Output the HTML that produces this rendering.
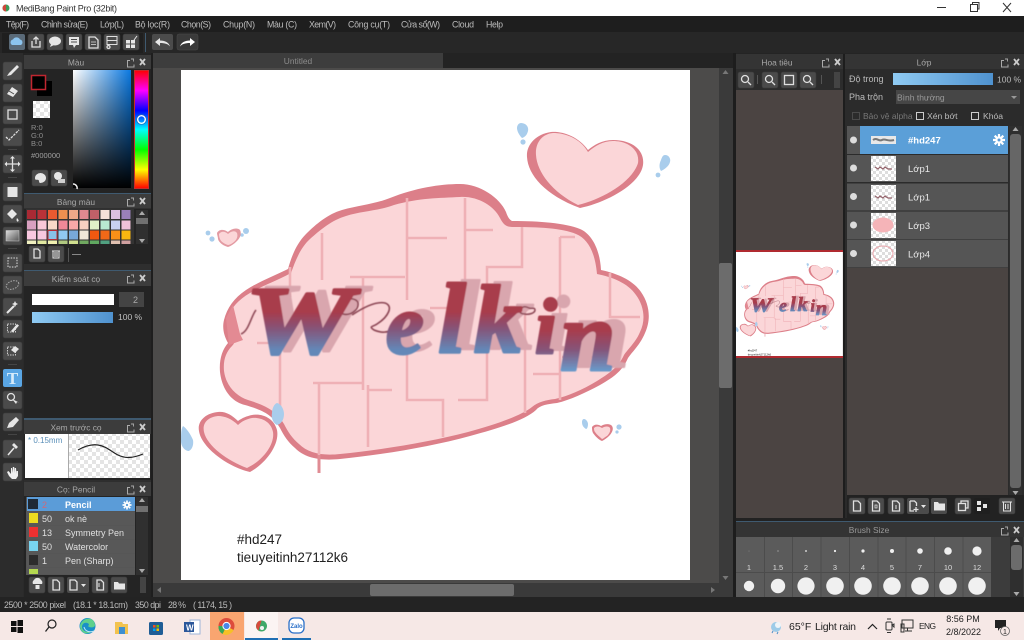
<!DOCTYPE html>
<html><head><meta charset="utf-8"><title>MediBang Paint Pro</title>
<style>
html,body{margin:0;padding:0;background:#2a2a2a;width:1024px;height:640px;overflow:hidden}
svg{display:block}
text{font-family:"Liberation Sans",sans-serif;font-size:8.6px;fill:#c4c4c4}
.h{fill:#a8a8a8;text-anchor:middle;font-size:8.4px}
.m{fill:#bdbdbd;font-size:8.8px}
.l{fill:#e0e0e0;font-size:9px}
.ic{fill:none;stroke:#e0e0e0;stroke-width:1.3}
.if{fill:#e6e6e6}
.mz{fill:none;stroke:#efb1b6;stroke-width:2.6}
.s{fill:#bcbcbc;font-size:8.8px}
.n{font-size:7.5px;fill:#ddd;text-anchor:middle}
.lt{font-family:"Liberation Serif",serif;font-style:italic;font-weight:700;stroke-linejoin:round}
.g{fill:#d9a6ae;stroke:#d9a6ae;stroke-width:2}
.k{fill:url(#ink);stroke:url(#ink);stroke-width:3}
.k2{fill:url(#ink2);stroke:url(#ink2);stroke-width:3}
</style></head><body>
<svg xmlns="http://www.w3.org/2000/svg" width="1024" height="640" viewBox="0 0 1024 640">
<defs>
<filter id="soft" x="-5%" y="-5%" width="110%" height="110%"><feGaussianBlur stdDeviation=".6"/></filter>
<pattern id="chk" width="8" height="8" patternUnits="userSpaceOnUse"><rect width="8" height="8" fill="#fff"/><rect width="4" height="4" fill="#e4e4e4"/><rect x="4" y="4" width="4" height="4" fill="#e4e4e4"/></pattern>
<pattern id="chk2" width="6" height="6" patternUnits="userSpaceOnUse"><rect width="6" height="6" fill="#fff"/><rect width="3" height="3" fill="#ddd"/><rect x="3" y="3" width="3" height="3" fill="#ddd"/></pattern>
<linearGradient id="sv1" x1="0" y1="0" x2="1" y2="0"><stop offset="0" stop-color="#fff"/><stop offset="1" stop-color="#0a78e0"/></linearGradient>
<linearGradient id="sv2" x1="0" y1="0" x2="0" y2="1"><stop offset="0" stop-color="#000" stop-opacity="0"/><stop offset="1" stop-color="#000"/></linearGradient>
<linearGradient id="hue" x1="0" y1="0" x2="0" y2="1"><stop offset="0" stop-color="#f00"/><stop offset=".17" stop-color="#f0f"/><stop offset=".34" stop-color="#00f"/><stop offset=".5" stop-color="#0ff"/><stop offset=".67" stop-color="#0f0"/><stop offset=".84" stop-color="#ff0"/><stop offset="1" stop-color="#f00"/></linearGradient>
<linearGradient id="bar" x1="0" y1="0" x2="1" y2="0"><stop offset="0" stop-color="#8fcaf2"/><stop offset="1" stop-color="#4f92cf"/></linearGradient>
<linearGradient id="grad" x1="0" y1="0" x2="1" y2="1"><stop offset="0" stop-color="#ddd"/><stop offset="1" stop-color="#555"/></linearGradient>
<linearGradient id="ink" gradientUnits="userSpaceOnUse" x1="0" y1="312" x2="0" y2="350"><stop offset="0" stop-color="#a83c4c"/><stop offset=".45" stop-color="#85557a"/><stop offset="1" stop-color="#6388b8"/></linearGradient>
<linearGradient id="ink2" gradientUnits="userSpaceOnUse" x1="0" y1="330" x2="0" y2="370"><stop offset="0" stop-color="#a83c4c"/><stop offset=".5" stop-color="#85557a"/><stop offset="1" stop-color="#6a98c8"/></linearGradient>
<g id="btn"><rect width="16" height="16" rx="2" fill="#4b4b4b" stroke="#3a3a3a" stroke-width=".6"/></g>
<g id="bt2"><rect width="19" height="18" rx="2" fill="#4b4b4b" stroke="#3a3a3a" stroke-width=".6"/></g>
<g id="dock"><path d="M-9 -1.5h-2.500v6.500h6.500v-2.500" fill="none" stroke="#aaa"/><path d="M-8 -3l2.500 0v2.500" fill="none" stroke="#aaa" stroke-width=".9"/><path d="M1 -3l5 6M6 -3l-5 6" stroke="#ccc" stroke-width="1.800"/></g>
<g id="gear"><circle r="3.600" fill="#fff"/><g stroke="#fff" stroke-width="2.200"><path d="M0-6V6M-6 0H6M-4.300-4.300L4.300 4.300M-4.300 4.300L4.300-4.300"/></g><circle r="1.500" fill="#5a9cd8"/></g>
<g id="art">
 <rect x="181" y="70" width="509" height="510" fill="#fff"/>
 <g fill="#a9cdec"><path d="M521 123c4 0 8 3 7 8-1 4-3 6-6 7-3-3-5-7-5-10 0-3 2-5 4-5z"/><circle cx="523" cy="142" r="2.600"/><path d="M665 155c4 0 6 4 5 7-1 4-5 7-9 9-2-3-2-7 0-11 1-3 2-5 4-5z"/><circle cx="658" cy="175" r="2.400"/>
 <path d="M183 426c3 2 7 7 10 14 1 6-2 11-5 11-4-1-7-5-7-10 0-6 0-12 2-15z"/><circle cx="208" cy="233" r="2.400"/><circle cx="212" cy="239" r="2.600"/><circle cx="246" cy="231" r="3"/><circle cx="242" cy="235" r="1.800"/><path d="M584 419c2 0 4 3 4 5 0 3-1 5-2 5-3-2-4-4-4-7 0-2 1-3 2-3z"/><circle cx="619" cy="427" r="2.600"/><circle cx="617" cy="432" r="1.600"/></g>
 <path d="M588 150C578 136 562 131 551 132 536 134 526 145 527 157 528 175 545 195 580 208 605 203 640 185 643 165 645 150 632 140 613 140 602 140 594 145 588 150Z" fill="#dc7f89"/>
 <path d="M588 152C580 138 565 133 553 133 542 134 535 143 536 155 537 172 552 192 578 205 600 200 632 183 638 163 640 150 628 141 613 141 603 141 595 146 588 152Z" fill="#fbd6d8"/>
 <path d="M460 184C480 184 500 198 506 212 508 218 510 220 512 221 540 221 565 223 580 229 592 234 600 250 601 270 615 273 632 279 641 292 650 305 651 320 645 333 640 345 632 352 628 358 622 372 612 378 600 385 585 393 570 400 557 403 548 404 540 405 536 410 525 420 500 428 470 436 430 447 380 455 340 459 320 461 305 458 295 448 288 442 284 436 280 428 272 414 262 410 245 405 232 402 222 390 220 372 219 360 222 350 228 343 224 336 222 328 224 320 227 308 234 298 246 290 258 282 274 276 288 269 291 258 296 244 306 234 316 224 328 214 342 210 360 205 375 204 390 198 415 188 440 184 460 184Z" fill="#dc7f89"/>
 <path d="M460 197C478 196 494 206 500 218 503 224 506 227 512 227 538 227 562 228 576 234 588 239 595 252 597 274 612 277 628 283 636 295 644 306 646 320 640 332 636 342 628 349 624 355 618 368 608 374 597 381 582 390 568 396 555 399 546 400 538 402 532 407 522 415 498 424 468 432 430 442 380 450 340 454 322 456 308 453 299 444 292 438 288 432 284 424 276 410 264 405 248 400 236 396 226 386 224 371 223 360 226 352 232 346 236 342 235 338 232 335 228 330 226 324 228 318 231 308 238 300 250 293 262 286 276 281 291 273 295 262 300 248 310 239 320 230 332 220 346 216 362 211 378 211 394 205 418 198 440 198 460 197Z" fill="#fbd6d8"/>
 <path d="M226 318L233 305 240 334 243 340 229 345Z" fill="#e38a93"/>
 <path class="mz" d="M322 233V280M290 267V297M280 350V407M350 277H405M407 198V300M407 238H447M465 198V283M465 230H493M522 227V267H487V400H458M560 237V400M560 237H575M610 273V317H640M363 277V390M313 383H363M319 383V455M368 385V447M368 390H392M407 353V400H443V437M525 310V413M533 374H560M562 357H597M430 308H463M257 343H280"/>
 <path d="M319 455V473" stroke="#e08c94" stroke-width="3"/>
 <path d="M238 421C232 415 225 411 218 412 206 413 197 421 199 431 201 446 225 466 250 472 265 464 280 445 277 430 274 418 262 413 252 415 247 416 242 418 238 421Z" fill="#dc7f89"/>
 <path d="M238 425C232 419 225 416 218 416 208 417 202 423 204 432 207 446 228 461 247 468 262 461 275 445 273 432 271 421 260 417 252 418 247 419 242 421 238 425Z" fill="#fbd6d8"/>
 <g fill="#a9cdec"><path d="M277 403c4 1 7 6 7 11 0 6-3 10-7 11-4-2-6-7-5-12 0-4 2-9 5-10z"/></g>
 <path d="M217 233c2-4 7-4 11-1 3-3 9-5 12-2 2 4 0 8-3 11-3 3-6 5-9 6-4-1-9-4-10-8 0-2-1-4-1-6z" fill="#e39aa2"/><path d="M219 234c2-3 6-3 9 0 3-3 7-4 9-1 1 3 0 6-2 8-2 2-5 4-7 4-3-1-7-3-8-6-1-2-1-4-1-5z" fill="#fbd6d8"/>
 <path d="M592 427c2-3 6-3 9-1 3-2 9-3 11 0 2 3 0 7-3 10-2 2-5 4-7 5-3-1-7-5-9-8-1-2-1-4-1-6z" fill="#dd7f89"/><path d="M594 428c2-2 5-2 8 0 3-2 7-2 8 0 1 3-1 6-3 8-2 1-4 3-5 3-2-2-5-4-7-7-1-1-1-3-1-4z" fill="#fbd6d8"/>
 <g filter="url(#soft)">
 <text class="lt g" x="257" y="350" textLength="108" lengthAdjust="spacingAndGlyphs" style="font-size:96px">W</text>
 <text class="lt g" x="398" y="350" style="font-size:85px">e</text>
 <text class="lt g" x="452" y="349" style="font-size:100px">l</text>
 <text class="lt g" x="486" y="349" style="font-size:96px">k</text>
 <text class="lt g" x="548" y="350" style="font-size:78px">i</text>
 <text class="lt g" x="574" y="367" style="font-size:100px">n</text>
 <path d="M340 305c6-9 17-7 18-2 1 7-8 13-15 11-5-2-5-6-3-9zM352 315c12-8 24-14 33-12 9 3 3 14-8 21-4 3-9 2-3 6 7 3 14 3 18-1" fill="none" stroke="#8a4452" stroke-width="1.600"/>
 <path d="M241 334c8-3 10-18 15-24M520 310c3-5 7-3 9-2 3 1 6-1 6 2s-6 5-10 4c-3 0-6-1-5-4z" fill="none" stroke="#8a4452" stroke-width="1.500"/>
 <text class="lt k" x="245" y="353" textLength="108" lengthAdjust="spacingAndGlyphs" style="font-size:96px">W</text>
 <text class="lt k" x="386" y="353" style="font-size:85px">e</text>
 <text class="lt k" x="438" y="352" style="font-size:100px">l</text>
 <text class="lt k" x="474" y="352" style="font-size:96px">k</text>
 <text class="lt k2" x="535" y="353" style="font-size:78px">i</text>
 <text class="lt k2" x="560" y="370" style="font-size:100px">n</text>
 </g>
 <text x="237" y="544" style="font-size:13.500px;fill:#222">#hd247</text>
 <text x="237" y="562" style="font-size:13.500px;fill:#222" textLength="111">tieuyeitinh27112k6</text>
</g>
<clipPath id="thumb"><rect x="736" y="252" width="107" height="105"/></clipPath>
<clipPath id="artc"><rect x="181" y="70" width="509" height="510"/></clipPath>
</defs>

<rect width="1024" height="640" fill="#2a2a2a"/>
<rect width="1024" height="16" fill="#fff"/>
<circle cx="6" cy="8" r="3.500" fill="#3d9a5a"/><path d="M6 4.500a3.500 3.500 0 0 0 0 7z" fill="#d0483c"/>
<text x="16" y="11.500" textLength="101" style="fill:#333;font-size:9px">MediBang Paint Pro (32bit)</text>
<path d="M937 7.500h9" stroke="#333"/><path d="M970.500 4.500h7v7h-7zM972.500 4.500v-2h6.500v6.500h-1.500" fill="none" stroke="#333"/><path d="M1003 3l8 9M1011 3l-8 9" stroke="#333"/>
<rect y="16" width="1024" height="16" fill="#1e1e1e"/>
<text class="m" x="6" y="27.500" textLength="23">Tệp(F)</text><text class="m" x="41" y="27.500" textLength="47">Chỉnh sửa(E)</text><text class="m" x="100" y="27.500" textLength="24">Lớp(L)</text><text class="m" x="135" y="27.500" textLength="35">Bộ lọc(R)</text><text class="m" x="181" y="27.500" textLength="30">Chọn(S)</text><text class="m" x="223" y="27.500" textLength="32">Chụp(N)</text><text class="m" x="267" y="27.500" textLength="30">Màu (C)</text><text class="m" x="309" y="27.500" textLength="27">Xem(V)</text><text class="m" x="348" y="27.500" textLength="42">Công cụ(T)</text><text class="m" x="401" y="27.500" textLength="39">Cửa sổ(W)</text><text class="m" x="452" y="27.500" textLength="22">Cloud</text><text class="m" x="486" y="27.500" textLength="17">Help</text>
<rect y="32" width="1024" height="21" fill="#272727"/>
<rect x="2" y="33" width="141" height="20" fill="#1f1f1f"/>
<path d="M145.500 33v19" stroke="#3f5a70"/>
<rect x="9" y="34" width="16" height="16" rx="2" fill="#5a6a78"/><path d="M12 45a3 3 0 0 1 1-5.500 4 4 0 0 1 7 0 3 3 0 0 1 1 5.500z" fill="#8cc4ee"/>
<use href="#btn" x="28" y="34"/><path d="M32 41v6h8v-6M36 44v-7M33.500 39.500l2.500-2.500 2.500 2.500" class="ic"/>
<use href="#btn" x="47" y="34"/><ellipse cx="55" cy="41" rx="6" ry="4.500" class="if"/><path d="M51 44l-1 3 4-2z" class="if"/>
<use href="#btn" x="66" y="34"/><rect x="69" y="37" width="10" height="8" class="if"/><path d="M73 45l1 3 2-3z" class="if"/><path d="M71 39.500h6M71 42h6" stroke="#4b4b4b"/>
<use href="#btn" x="85" y="34"/><path d="M89 37h6l3 3v8h-9z" class="ic"/><path d="M91 42h5M91 44.500h5" stroke="#e0e0e0" stroke-width=".8"/>
<use href="#btn" x="104" y="34"/><path d="M107 36.500h10v4h-10zM107 40.500h10v4h-10zM107 44.500h10" class="ic" style="stroke-width:1"/><circle cx="108.500" cy="47" r="1.500" class="ic"/>
<use href="#btn" x="123" y="34"/><rect x="126" y="40" width="4" height="3.500" class="if"/><rect x="131" y="40" width="4" height="3.500" class="if"/><rect x="126" y="44.500" width="4" height="3.500" class="if"/><rect x="131" y="44.500" width="4" height="3.500" class="if"/><path d="M134 40l3-4" stroke="#e6e6e6"/>
<rect x="152" y="34" width="21" height="16" rx="2" fill="#4b4b4b"/><path d="M155 42l5-4v2.500c5 0 9 2 10 6-2-2.500-5-3.500-10-3.500v3z" class="if"/>
<rect x="177" y="34" width="21" height="16" rx="2" fill="#3a3a3a" stroke="#4a4a4a" stroke-width=".5"/><path d="M195 42l-5-4v2.500c-5 0-9 2-10 6 2-2.500 5-3.500 10-3.500v3z" fill="#fff"/>
<rect y="53" width="1024" height="2" fill="#242424"/>

<rect x="0" y="53" width="23" height="544" fill="#2c2c2c"/>
<use href="#bt2" x="3" y="62"/><path d="M7 76l2-3 8-8 2 2-8 8z" class="if"/>
<use href="#bt2" x="3" y="84"/><path d="M7 94l5-7 6 4-5 6z" class="if"/><path d="M9 91l5 3" stroke="#4b4b4b"/>
<use href="#bt2" x="3" y="106"/><rect x="8" y="110" width="9" height="9" class="ic"/>
<use href="#bt2" x="3" y="128"/><path d="M6 137l3 3 3-3 7-7" class="ic" stroke-dasharray="2.500 1"/>
<use href="#bt2" x="3" y="155"/><path d="M12.500 157v14M5.500 164h14" class="ic"/><path d="M12.500 156l-2.500 2.500h5zM12.500 172l-2.500-2.500h5zM4.500 164l2.500-2.500v5zM20.500 164l-2.500-2.500v5z" class="if"/>
<use href="#bt2" x="3" y="183"/><rect x="7.500" y="187" width="10" height="10" class="if"/>
<use href="#bt2" x="3" y="205"/><path d="M7 214l5-5 5 5-5 5zM17 218c2 2 2 3 1 3.500s-2-1-1-3.500z" class="if"/>
<use href="#bt2" x="3" y="227"/><rect x="6" y="230.500" width="13" height="10.500" fill="url(#grad)" stroke="#ccc" stroke-width=".5"/>
<use href="#bt2" x="3" y="254"/><rect x="8" y="258" width="9" height="9" fill="none" stroke="#ddd" stroke-dasharray="1.500 1.200"/>
<use href="#bt2" x="3" y="276"/><ellipse cx="12.500" cy="285" rx="6.500" ry="4" fill="none" stroke="#aaa" stroke-dasharray="1.500 1.200" transform="rotate(-20 12.500 285)"/>
<use href="#bt2" x="3" y="298"/><path d="M7 313l7-7" stroke="#e6e6e6" stroke-width="2"/><path d="M15 301l1 2 2 1-2 1-1 2-1-2-2-1 2-1z" class="if"/>
<use href="#bt2" x="3" y="320"/><rect x="7.500" y="324" width="8" height="8" fill="none" stroke="#ccc" stroke-dasharray="1.500 1"/><path d="M11 331l6-7 2 1.500-6 7z" class="if"/>
<use href="#bt2" x="3" y="342"/><rect x="7.500" y="347" width="8" height="8" fill="none" stroke="#ccc" stroke-dasharray="1.500 1"/><path d="M11 350l4-4 4 3-4 4z" class="if"/>
<rect x="3" y="369" width="19" height="18" rx="2" fill="#5aa6e4"/><text x="12.500" y="384" style="font-family:'Liberation Serif',serif;font-size:17px;font-weight:700;fill:#d8ecfa;text-anchor:middle">T</text>
<use href="#bt2" x="3" y="391"/><circle cx="11" cy="397" r="3.500" class="ic"/><path d="M12 399l4 5 1-2 2 .5z" class="if"/>
<use href="#bt2" x="3" y="413"/><path d="M7 428l2-5 7-6 3 3-6 7z" class="if"/>
<use href="#bt2" x="3" y="440"/><path d="M8 455l6-7" stroke="#e6e6e6" stroke-width="1.500"/><path d="M12 445l2-2 4 4-2 2z" class="if"/>
<use href="#bt2" x="3" y="463"/><path d="M7 472l2 4 3 3h4l2-3v-5h-1.500v3l-.5-6h-1.300v5l-.5-6h-1.400v6l-.8-5H11v6l-2.500-3z" fill="#f0f0f0"/>
<g fill="#454545"><rect x="8" y="149" width="9" height="1"/><rect x="8" y="177" width="9" height="1"/><rect x="8" y="248" width="9" height="1"/><rect x="8" y="364" width="9" height="1"/><rect x="8" y="434" width="9" height="1"/></g>

<rect x="24" y="55" width="127" height="542" fill="#242424"/>
<rect x="24" y="55" width="127" height="14" fill="#3c3c3c"/><text class="h" x="76" y="65.500">Màu</text><use href="#dock" x="139" y="62"/>
<rect x="37" y="81" width="15" height="15" fill="#000"/>
<rect x="31.500" y="75.500" width="14" height="14" fill="#000" stroke="#c02630" stroke-width="1.500"/>
<rect x="33" y="101" width="17" height="17" fill="url(#chk)"/>
<text x="31" y="130" style="fill:#8f8f8f;font-size:7.500px">R:0</text><text x="31" y="138" style="fill:#8f8f8f;font-size:7.500px">G:0</text><text x="31" y="146" style="fill:#8f8f8f;font-size:7.500px">B:0</text>
<text x="31" y="158" style="fill:#a0a0a0;font-size:7.500px">#000000</text>
<use href="#btn" x="32" y="170"/><path d="M35 178a5.500 5 0 1 1 5.500 5c-2 0-1-2-2-3s-3.500 1-3.500-2z" class="if"/>
<use href="#btn" x="51" y="170"/><circle cx="58" cy="176" r="4" class="if"/><rect x="58" y="179" width="7" height="4" fill="#cfcfcf"/>
<rect x="73" y="70" width="58" height="118" fill="url(#sv1)"/><rect x="73" y="70" width="58" height="118" fill="url(#sv2)"/>
<rect x="134.500" y="70.500" width="14" height="118" fill="url(#hue)" stroke="#c62c2c"/>
<circle cx="141.500" cy="119.500" r="3.800" fill="none" stroke="#fff" stroke-width="1.400"/><circle cx="141.500" cy="119.500" r="5" fill="none" stroke="#2a6ab0" stroke-width=".6"/>
<path d="M73 184a4 4 0 0 1 4 5" fill="none" stroke="#eee" stroke-width="1.500"/>
<rect x="24" y="193" width="127" height="1" fill="#3f5a70"/>
<rect x="24" y="194" width="127" height="14.500" fill="#3c3c3c"/><text class="h" x="76" y="205">Bảng màu</text><use href="#dock" x="139" y="201"/>
<rect x="26" y="209" width="108" height="35" fill="#333"/>
<rect x="27" y="210" width="9" height="9" fill="#a92a34"/><rect x="37.500" y="210" width="9" height="9" fill="#b93238"/><rect x="48" y="210" width="9" height="9" fill="#e85a30"/><rect x="58.500" y="210" width="9" height="9" fill="#ee9050"/><rect x="69" y="210" width="9" height="9" fill="#f0a888"/><rect x="79.500" y="210" width="9" height="9" fill="#e08890"/><rect x="90" y="210" width="9" height="9" fill="#c06068"/><rect x="100.500" y="210" width="9" height="9" fill="#f5e0d8"/><rect x="111" y="210" width="9" height="9" fill="#dcc0e0"/><rect x="121.500" y="210" width="9" height="9" fill="#9a80b8"/>
<rect x="27" y="220.500" width="9" height="9" fill="#d8a0c0"/><rect x="37.500" y="220.500" width="9" height="9" fill="#f8c8d8"/><rect x="48" y="220.500" width="9" height="9" fill="#f8d8c8"/><rect x="58.500" y="220.500" width="9" height="9" fill="#f08898"/><rect x="69" y="220.500" width="9" height="9" fill="#f8a8a8"/><rect x="79.500" y="220.500" width="9" height="9" fill="#f8d0c0"/><rect x="90" y="220.500" width="9" height="9" fill="#e0f0c8"/><rect x="100.500" y="220.500" width="9" height="9" fill="#b8e8d0"/><rect x="111" y="220.500" width="9" height="9" fill="#c8d0f0"/><rect x="121.500" y="220.500" width="9" height="9" fill="#f0c0d8"/>
<rect x="27" y="230.500" width="9" height="9" fill="#f8c8e0"/><rect x="37.500" y="230.500" width="9" height="9" fill="#f8c8e0"/><rect x="48" y="230.500" width="9" height="9" fill="#88c0e8" stroke="#b82c38"/><rect x="58.500" y="230.500" width="9" height="9" fill="#90c8f0"/><rect x="69" y="230.500" width="9" height="9" fill="#78a8d8"/><rect x="79.500" y="230.500" width="9" height="9" fill="#f0e8d8"/><rect x="90" y="230.500" width="9" height="9" fill="#f05810"/><rect x="100.500" y="230.500" width="9" height="9" fill="#f06818"/><rect x="111" y="230.500" width="9" height="9" fill="#f89018"/><rect x="121.500" y="230.500" width="9" height="9" fill="#f8b810"/>
<rect x="27" y="240.500" width="9" height="3.500" fill="#f0f0c0"/><rect x="37.500" y="240.500" width="9" height="3.500" fill="#e0e8a0"/><rect x="48" y="240.500" width="9" height="3.500" fill="#f0f0b0"/><rect x="58.500" y="240.500" width="9" height="3.500" fill="#b0c880"/><rect x="69" y="240.500" width="9" height="3.500" fill="#d0e090"/><rect x="79.500" y="240.500" width="9" height="3.500" fill="#70a860"/><rect x="90" y="240.500" width="9" height="3.500" fill="#60a860"/><rect x="100.500" y="240.500" width="9" height="3.500" fill="#50a080"/><rect x="111" y="240.500" width="9" height="3.500" fill="#e0c0b0"/><rect x="121.500" y="240.500" width="9" height="3.500" fill="#d0a0a0"/>
<rect x="136" y="210" width="12" height="34" fill="#303030"/><rect x="136" y="218" width="12" height="6" fill="#707070"/><path d="M142 211l-3 4h6zM142 243l-3-4h6z" fill="#aaa"/>
<use href="#btn" x="29" y="246"/><path d="M34 249h4l2 2v7h-6z" class="ic"/>
<use href="#btn" x="48" y="246"/><path d="M52 251h8M53 251v7h6v-7M55 252v5M57 252v5" stroke="#e0e0e0" fill="none"/>
<path d="M68.500 248v14" stroke="#555"/><path d="M72 254.500h9" stroke="#888"/>
<rect x="24" y="264" width="127" height="7" fill="#2e2e2e"/>
<rect x="24" y="270" width="127" height="1" fill="#3f5a70"/>
<rect x="24" y="271" width="127" height="15" fill="#3c3c3c"/><text class="h" x="76" y="282">Kiểm soát cọ</text><use href="#dock" x="139" y="278"/>
<rect x="32" y="294" width="82" height="11" fill="#fff"/>
<rect x="119" y="292" width="25" height="15" fill="#444"/><text x="133" y="303" style="fill:#aaa;font-size:9px">2</text>
<rect x="32" y="312" width="81" height="11" fill="url(#bar)"/>
<text x="118" y="320" style="fill:#c0c0c0;font-size:8.500px">100 %</text>
<rect x="24" y="418" width="127" height="2" fill="#3f5a70"/>
<rect x="24" y="420" width="127" height="14" fill="#3c3c3c"/><text class="h" x="76" y="430.500">Xem trước cọ</text><use href="#dock" x="139" y="427"/>
<rect x="25" y="434" width="125" height="44" fill="url(#chk)"/><rect x="25" y="434" width="43" height="44" fill="#fff"/><path d="M68.500 434v44" stroke="#aaa"/>
<text x="28" y="443" style="fill:#5a8fb8;font-size:8px">* 0.15mm</text>
<path d="M78 450c7-4 13-6 20-5 8 1 14 7 20 10 6 3 13 4 25-1" fill="none" stroke="#222" stroke-width="1.200"/>
<rect x="24" y="480" width="127" height="2" fill="#2e2e2e"/>
<rect x="24" y="482" width="127" height="14" fill="#3c3c3c"/><text class="h" x="76" y="492.500">Cọ: Pencil</text><use href="#dock" x="139" y="489"/>
<rect x="26" y="497" width="109" height="78" fill="#555"/>
<rect x="27" y="497" width="108" height="14" fill="#5b9cd8"/><rect x="28" y="499" width="10" height="10" fill="#1f2a36"/><text x="42" y="508" style="fill:#d06878;font-size:9px">2</text><text x="65" y="508" style="fill:#fff;font-size:9px;font-weight:700">Pencil</text><use href="#gear" transform="translate(127,505) scale(.75)"/>
<rect x="27" y="511.500" width="108" height="13.500" fill="#585858"/><rect x="29" y="513" width="9" height="10" fill="#ecdc20"/><text x="42" y="522" class="l">50</text><text x="65" y="522" class="l">ok nè</text>
<rect x="27" y="525.500" width="108" height="13.500" fill="#585858"/><rect x="29" y="527" width="9" height="10" fill="#ee3030"/><text x="42" y="536" class="l">13</text><text x="65" y="536" class="l">Symmetry Pen</text>
<rect x="27" y="539.500" width="108" height="13.500" fill="#585858"/><rect x="29" y="541" width="9" height="10" fill="#78d4f0"/><text x="42" y="550" class="l">50</text><text x="65" y="550" class="l">Watercolor</text>
<rect x="27" y="553.500" width="108" height="13.500" fill="#585858"/><rect x="29" y="555" width="9" height="10" fill="#2c2c2c"/><text x="42" y="564" class="l">1</text><text x="65" y="564" class="l">Pen (Sharp)</text>
<rect x="27" y="567.500" width="108" height="6.500" fill="#585858"/><rect x="29" y="569" width="9" height="5" fill="#b4d850"/>
<rect x="136" y="497" width="12" height="78" fill="#303030"/><rect x="136" y="506" width="12" height="6" fill="#707070"/><path d="M142 498l-3 4h6zM142 573l-3-4h6z" fill="#aaa"/>
<use href="#btn" x="29" y="577"/><path d="M33 584a3 3 0 0 1 1-4 4 4 0 0 1 7 0 3 3 0 0 1 1 4zM35.500 585h4v4h-4z" class="if"/>
<use href="#btn" x="48" y="577"/><path d="M53 580h4l2.500 2.500V590H53z" class="ic"/>
<rect x="67" y="577" width="22" height="16" rx="2" fill="#4b4b4b"/><path d="M70 580h5l2 2v8h-7z" class="ic"/><path d="M81 584h5l-2.500 3z" class="if"/>
<use href="#btn" x="92" y="577"/><path d="M97 580h4l2.500 2.500V590H97z" class="ic"/><path d="M99 583v4" stroke="#e0e0e0"/>
<use href="#btn" x="111" y="577"/><path d="M114 582h4l1 1.500h6v6h-11z" class="if"/>
<rect x="140" y="577" width="6" height="16" fill="#444"/>
<rect x="151" y="53" width="2" height="544" fill="#1e1e1e"/>

<rect x="153" y="53" width="580" height="544" fill="#4c4b4a"/>
<rect x="153" y="53" width="290" height="15" fill="#3d3d3d"/><text x="298" y="64" style="fill:#8c8c8c;font-size:8.400px;text-anchor:middle">Untitled</text>
<rect x="443" y="53" width="290" height="15" fill="#232323"/>
<use href="#art" clip-path="url(#artc)"/>
<rect x="719" y="68" width="14" height="529" fill="#3a3a3a"/><rect x="719" y="263" width="13" height="125" rx="2" fill="#6c6c6c"/><path d="M725.500 70l-3 4h6zM725.500 580l-3-4h6z" fill="#777"/>
<rect x="153" y="583" width="566" height="14" fill="#3a3a3a"/><rect x="370" y="584" width="144" height="12" rx="2" fill="#6c6c6c"/><path d="M157 590l4-3v6zM715 590l-4-3v6z" fill="#777"/>
<rect x="733" y="53" width="3" height="544" fill="#1d1d1d"/>

<rect x="736" y="54" width="107" height="464" fill="#4b4442"/>
<rect x="736" y="54" width="107" height="15" fill="#343434"/><text class="h" x="777" y="65.500">Hoa tiêu</text><use href="#dock" x="834" y="62"/>
<rect x="736" y="69" width="107" height="21" fill="#2c2c2c"/>
<use href="#btn" x="738" y="72"/><circle cx="745" cy="79" r="3.500" class="ic"/><path d="M748 82l3 3" class="ic"/>
<path d="M757.500 75v9" stroke="#555"/>
<use href="#btn" x="762" y="72"/><circle cx="769" cy="79" r="3.500" class="ic"/><path d="M772 82l3 3" class="ic"/>
<use href="#btn" x="781" y="72"/><rect x="784.500" y="75.500" width="9" height="9" class="ic"/>
<use href="#btn" x="800" y="72"/><circle cx="807" cy="79" r="3.500" class="ic"/><path d="M810 82l3 3" class="ic"/>
<path d="M821.500 75v9" stroke="#555"/><rect x="834" y="72" width="6" height="16" fill="#444"/>
<rect x="736" y="250" width="107" height="2" fill="#b02a30"/>
<g clip-path="url(#thumb)"><g transform="translate(736,252) scale(.21) translate(-181,-70)"><use href="#art"/></g></g>
<rect x="736" y="356" width="107" height="2" fill="#b02a30"/>

<rect x="843" y="54" width="2" height="464" fill="#1d1d1d"/>
<rect x="845" y="54" width="179" height="15" fill="#343434"/><text class="h" x="924" y="65.500">Lớp</text><use href="#dock" x="1013" y="62"/>
<rect x="845" y="69" width="179" height="429" fill="#2b2b2b"/>
<text x="849" y="82" class="l" style="fill:#bbb">Độ trong</text><rect x="893" y="73" width="100" height="12" fill="url(#bar)"/><text x="997" y="82.500" style="fill:#bbb;font-size:8.500px">100 %</text>
<text x="849" y="100" class="l" style="fill:#bbb">Pha trộn</text><rect x="896" y="90" width="124" height="14" fill="#464646"/><text x="897" y="100.500" style="fill:#999;font-size:8.500px">Bình thường</text><path d="M1011 96h6l-3 3z" fill="#999"/>
<rect x="852.500" y="112.500" width="7" height="7" fill="none" stroke="#4a4a4a"/><text x="863" y="119" style="fill:#777;font-size:8.500px">Bảo vệ alpha</text>
<rect x="916.500" y="112.500" width="7" height="7" fill="none" stroke="#ccc"/><text x="927" y="119" style="font-size:8.600px;fill:#bbb">Xén bớt</text>
<rect x="971.500" y="112.500" width="7" height="7" fill="none" stroke="#ccc"/><text x="983" y="119" style="font-size:8.600px;fill:#bbb">Khóa</text>
<rect x="847" y="126" width="161" height="142" fill="#2b2b2b"/>
<rect x="847" y="126" width="14" height="28" fill="#555"/><rect x="860" y="126" width="148" height="28" fill="#5b9fd8"/>
<circle cx="853.500" cy="140" r="3.500" fill="#ddd"/>
<rect x="871" y="136" width="25" height="8" fill="#e8e8e8"/><path d="M873 140c4-3 6 2 9 0s6 2 12 0" stroke="#777" fill="none" stroke-width="2"/>
<text x="908" y="143.500" style="fill:#fff;font-size:9.500px;font-weight:700">#hd247</text>
<use href="#gear" transform="translate(999,140)"/>
<rect x="847" y="155" width="161" height="27" fill="#555"/><circle cx="853.500" cy="168" r="3.500" fill="#ddd"/><rect x="871" y="156" width="25" height="25" fill="url(#chk2)"/><path d="M875 167l3 2 2-2 3 2 2-2 3 2 4 0" stroke="#94626a" fill="none" stroke-width="1.200"/><text x="908" y="172" style="fill:#e8e8e8;font-size:9.500px">Lớp1</text>
<rect x="847" y="183.500" width="161" height="27" fill="#555"/><circle cx="853.500" cy="196.500" r="3.500" fill="#ddd"/><rect x="871" y="185" width="25" height="25" fill="url(#chk2)"/><path d="M875 196l3 2 2-2 3 2 2-2 3 2 4 0" stroke="#94626a" fill="none" stroke-width="1.200"/><text x="908" y="200.500" style="fill:#e8e8e8;font-size:9.500px">Lớp1</text>
<rect x="847" y="211.500" width="161" height="28" fill="#555"/><circle cx="853.500" cy="225" r="3.500" fill="#ddd"/><rect x="871" y="213" width="25" height="25" fill="url(#chk2)"/><ellipse cx="883" cy="225" rx="10.500" ry="7.500" fill="#f5b4b8"/><text x="908" y="229" style="fill:#e8e8e8;font-size:9.500px">Lớp3</text>
<rect x="847" y="240" width="161" height="27.500" fill="#555"/><circle cx="853.500" cy="253.500" r="3.500" fill="#ddd"/><rect x="871" y="241" width="25" height="25" fill="url(#chk2)"/><ellipse cx="883" cy="253.500" rx="10" ry="7.500" fill="none" stroke="#eba6ac"/><text x="908" y="257.500" style="fill:#e8e8e8;font-size:9.500px">Lớp4</text>
<rect x="847" y="268" width="161" height="227" fill="#4a4442"/>
<rect x="1009" y="126" width="13" height="369" fill="#2f2f2f"/><rect x="1010" y="134" width="11" height="354" rx="3" fill="#666"/><path d="M1015.500 127l-3 4h6zM1015.500 495l-3-4h6z" fill="#aaa"/>
<rect x="847" y="495" width="177" height="23" fill="#222"/>
<use href="#btn" x="849" y="498"/><path d="M853.500 501h4.500l2.500 2.500V511h-7z" class="ic"/>
<use href="#btn" x="868" y="498"/><path d="M872.500 501h4.500l2.500 2.500V511h-7z" class="ic"/><path d="M875 505h2v3h-2z" class="ic" style="stroke-width:.8"/>
<use href="#btn" x="888" y="498"/><path d="M892.500 501h4.500l2.500 2.500V511h-7z" class="ic"/><path d="M896 505v4" stroke="#e0e0e0"/>
<rect x="907" y="498" width="22" height="16" rx="2" fill="#4b4b4b"/><path d="M910 501h4.500l2 2v3M910 501v10h4M916 507v5M913.500 509.500h5" class="ic"/><path d="M921 505h5l-2.500 3z" class="if"/>
<rect x="931" y="498" width="16" height="16" rx="2" fill="#4b4b4b"/><path d="M934 502h4l1 1.500h6v7h-11z" class="if"/>
<use href="#btn" x="955" y="498"/><rect x="958.500" y="503.500" width="7" height="7" class="ic"/><path d="M961 503v-2h7v7h-2" class="ic"/>
<rect x="974" y="498" width="16" height="16" rx="2" fill="#1f1f1f"/><rect x="977" y="501" width="4" height="4" class="if"/><rect x="977" y="507" width="4" height="4" class="if"/><rect x="983" y="504" width="4" height="4" class="if"/>
<use href="#btn" x="999" y="498"/><path d="M1002 502h10M1003.500 502v9h7v-9M1005.500 504v5M1008 504v5" fill="none" stroke="#e0e0e0"/>

<rect x="736" y="518" width="288" height="3" fill="#222"/><rect x="736" y="521" width="288" height="1" fill="#3f5a70"/>
<rect x="736" y="522" width="288" height="15" fill="#343434"/><text x="869" y="533" style="fill:#999;font-size:8.400px;text-anchor:middle">Brush Size</text><use href="#dock" x="1013" y="530"/>
<rect x="736" y="537" width="288" height="60" fill="#3c3c3c"/>
<rect x="736" y="537" width="255" height="60" fill="#5b5b5b"/>
<path d="M736 572.500h255M764.500 537v60M792.500 537v60M821 537v60M849.500 537v60M878 537v60M906 537v60M934.500 537v60M963 537v60" stroke="#4c4c4c"/>
<g fill="#f0f0f0"><circle cx="749" cy="551" r=".3"/><circle cx="778" cy="551" r=".5"/><circle cx="806" cy="551" r=".9"/><circle cx="835" cy="551" r="1.100"/><circle cx="863" cy="551" r="1.600"/><circle cx="892" cy="551" r="2"/><circle cx="920" cy="551" r="2.800"/><circle cx="948" cy="551" r="3.800"/><circle cx="977" cy="551" r="4.600"/>
<circle cx="749" cy="586" r="5.200"/><circle cx="778" cy="586" r="7.200"/><circle cx="806" cy="586" r="8.600"/><circle cx="835" cy="586" r="8.800"/><circle cx="863" cy="586" r="8.800"/><circle cx="892" cy="586" r="8.800"/><circle cx="920" cy="586" r="8.800"/><circle cx="948" cy="586" r="8.800"/><circle cx="977" cy="586" r="8.800"/></g>
<text x="749" y="570" class="n">1</text><text x="778" y="570" class="n">1.5</text><text x="806" y="570" class="n">2</text><text x="835" y="570" class="n">3</text><text x="863" y="570" class="n">4</text><text x="892" y="570" class="n">5</text><text x="920" y="570" class="n">7</text><text x="948" y="570" class="n">10</text><text x="977" y="570" class="n">12</text>
<rect x="1010" y="537" width="13" height="60" fill="#2f2f2f"/><rect x="1011" y="545" width="11" height="25" rx="3" fill="#6c6c6c"/><path d="M1016.500 538l-3 4h6zM1016.500 596l-3-4h6z" fill="#aaa"/>

<rect y="597" width="1024" height="15" fill="#232323"/>
<text x="4" y="608" class="s" textLength="62">2500 * 2500 pixel</text><text x="73" y="608" class="s" textLength="55">(18.1 * 18.1cm)</text><text x="135" y="608" class="s" textLength="26">350 dpi</text><text x="168" y="608" class="s" textLength="18">28 %</text><text x="193" y="608" class="s" textLength="39">( 1174, 15 )</text>

<rect y="612" width="1024" height="28" fill="#f6e8e6"/>
<g fill="#111"><rect x="11" y="621" width="5.500" height="5"/><rect x="17.500" y="620" width="5.500" height="6"/><rect x="11" y="627" width="5.500" height="5"/><rect x="17.500" y="627" width="5.500" height="6"/></g>
<circle cx="52" cy="624" r="4" fill="none" stroke="#222" stroke-width="1.200"/><path d="M49 627l-3.500 4.500" stroke="#222" stroke-width="1.300"/>
<circle cx="87.500" cy="626" r="8" fill="#1a8fc8"/><path d="M80 626c1-8 14-11 15-1 0 3-6 3-7 1 3-2-2-5-5-2-3 4 1 9 8 8-4 3-11 1-11-6z" fill="#5fd08c"/><path d="M84 627c1 4 5 6 10 4" stroke="#bfe8f5" fill="none"/>
<path d="M115 622h7l1 2h5v10h-13z" fill="#f2c24e"/><rect x="119" y="627" width="6" height="7" fill="#3f8fd0"/>
<rect x="149" y="622" width="14" height="13" rx="1.500" fill="#1f5d96"/><rect x="153" y="625" width="2.500" height="2.500" fill="#f25022"/><rect x="156.500" y="625" width="2.500" height="2.500" fill="#7fba00"/><rect x="153" y="628.500" width="2.500" height="2.500" fill="#00a4ef"/><rect x="156.500" y="628.500" width="2.500" height="2.500" fill="#ffb900"/>
<rect x="190" y="620" width="10" height="14" fill="#fff" stroke="#9db5d8"/><rect x="184" y="622" width="10" height="10" fill="#2b579a"/><text x="186" y="630.500" style="fill:#fff;font-size:8px;font-weight:700">W</text>
<rect x="210" y="612" width="34" height="28" fill="#f9a570"/>
<circle cx="226.500" cy="626" r="8" fill="#dd4b3c"/><path d="M226.500 626l7 4a8 8 0 0 1-11 4z" fill="#f6c026"/><path d="M226.500 626l-4 8a8 8 0 0 1-4-8z" fill="#3aa757"/><circle cx="226.500" cy="626" r="3.600" fill="#4a86e8" stroke="#fff"/>
<rect x="245" y="612" width="33" height="28" fill="#fbf4f3"/><rect x="245" y="638" width="33" height="2" fill="#1f6fb4"/>
<circle cx="261.500" cy="626" r="5.500" fill="#3fa868"/><path d="M261.500 620.500a5.500 5.500 0 0 0-3 10z" fill="#d84a3c"/><circle cx="262" cy="628" r="2" fill="#f2f2f2"/>
<rect x="282" y="638" width="29" height="2" fill="#1f6fb4"/>
<rect x="289" y="618" width="15" height="15" rx="5" fill="#fff" stroke="#2a6fc8" stroke-width="1.300"/><text x="296.500" y="628" style="fill:#2a6fc8;font-size:6px;text-anchor:middle;font-weight:700">Zalo</text>
<circle cx="776" cy="627" r="5" fill="#9dcbe8"/><circle cx="778" cy="625" r="3" fill="#eef4f8"/><path d="M772 633l1-2M777 634l1-2" stroke="#4f8fc8"/>
<text x="789" y="630" style="font-size:10.500px;fill:#222">65°F</text><text x="815" y="630" style="font-size:10.500px;fill:#222" textLength="41">Light rain</text>
<path d="M868 629l4.500-4.500 4.500 4.500" fill="none" stroke="#222" stroke-width="1.200"/>
<rect x="886" y="622" width="6" height="8" rx="1" fill="none" stroke="#333"/><path d="M887 619h4M887 632.500h4M892 625l2-1v3z" stroke="#333" fill="none"/>
<rect x="902" y="620" width="11" height="8" fill="none" stroke="#333"/><path d="M905 631h7M907.500 628v3M901 624h3v8h-3z" stroke="#333" fill="none"/>
<text x="919" y="629" style="font-size:8.400px;fill:#222" textLength="17">ENG</text>
<text x="963" y="622" style="font-size:9px;fill:#222;text-anchor:middle">8:56 PM</text><text x="963.500" y="635" style="font-size:9px;fill:#222;text-anchor:middle">2/8/2022</text>
<path d="M995 620h11v8h-6l-2 3v-3h-3z" fill="#222"/><circle cx="1005" cy="631" r="4.500" fill="#f6e8e6" stroke="#666" stroke-width=".8"/><text x="1005" y="634" style="font-size:7px;fill:#222;text-anchor:middle">1</text>
</svg>
</body></html>
